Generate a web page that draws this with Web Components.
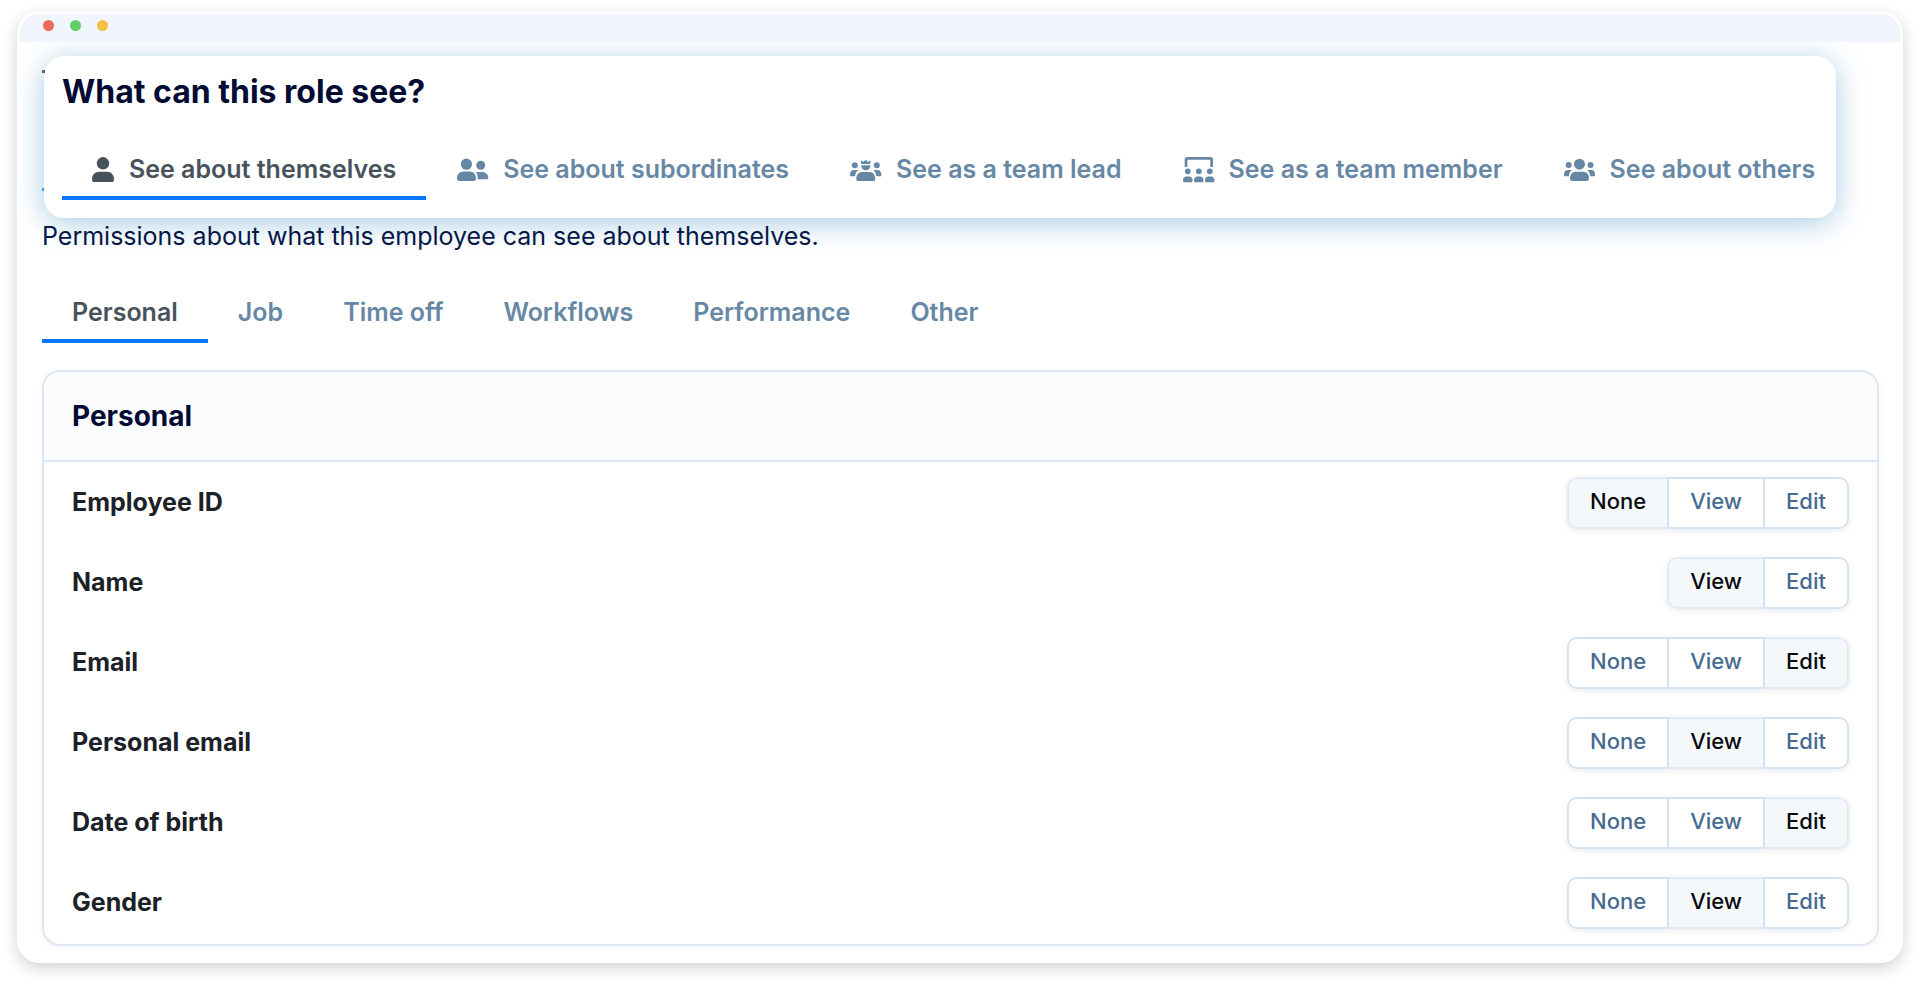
<!DOCTYPE html>
<html lang="en">
<head>
<meta charset="utf-8">
<title>Role permissions</title>
<style>
  body {
    margin: 0;
    padding: 11px 17px 24px;
    background: #fff;
    font-family: Inter, "Liberation Sans", sans-serif;
  }
</style>
</head>
<body>

<app-window>
  <role-card heading="What can this role see?">
    <tab-bar label="Audience">
      <tab-item icon="user" selected>See about themselves</tab-item>
      <tab-item icon="pair">See about subordinates</tab-item>
      <tab-item icon="lead">See as a team lead</tab-item>
      <tab-item icon="class">See as a team member</tab-item>
      <tab-item icon="group">See about others</tab-item>
    </tab-bar>
  </role-card>
  <section-note>Permissions about what this employee can see about themselves.</section-note>
  <tab-bar label="Category" compact>
    <tab-item selected>Personal</tab-item>
    <tab-item>Job</tab-item>
    <tab-item>Time off</tab-item>
    <tab-item>Workflows</tab-item>
    <tab-item>Performance</tab-item>
    <tab-item>Other</tab-item>
  </tab-bar>
  <permission-panel heading="Personal">
    <permission-row name="Employee ID" options="None,View,Edit" value="None"></permission-row>
    <permission-row name="Name" options="View,Edit" value="View"></permission-row>
    <permission-row name="Email" options="None,View,Edit" value="Edit"></permission-row>
    <permission-row name="Personal email" options="None,View,Edit" value="View"></permission-row>
    <permission-row name="Date of birth" options="None,View,Edit" value="Edit"></permission-row>
    <permission-row name="Gender" options="None,View,Edit" value="View"></permission-row>
  </permission-panel>
</app-window>

<script>
const icons = {
  user: [22, `<circle cx="11" cy="7.3" r="6.2"/><path d="M7 15.7h8c4.300 0 7 3.100 7 7.800 0 1.700-.9 2.600-2.400 2.600H2.400C.9 26.100 0 25.200 0 23.500c0-4.700 2.700-7.800 7-7.800z"/>`],
  pair: [31, `<circle cx="9.4" cy="8.2" r="5.6"/><path d="M6.500 15.500h6c4 0 6.500 2.800 6.500 7 0 1.600-.8 2.400-2.200 2.400H2.200C.8 24.900 0 24.100 0 22.500c0-4.200 2.500-7 6.500-7z"/><circle cx="23.700" cy="9.200" r="4.500"/><path d="M19 16h6c3.700 0 6.300 2.500 6.300 5.500 0 1.200-.7 1.800-1.800 1.800h-8.700c-.1-3-.6-5.200-1.800-7.300z"/>`],
  lead: [31, `<path d="M10.600 4.400l2.500 1.400 2.600-1.900 2.600 1.900 2.500-1.400-.7 3.600h-8.800z"/><path d="M11.200 9.200h9.200c0 3-2 5-4.600 5s-4.600-2-4.600-5z"/><path d="M12.500 15.900h6.600c3.800 0 6.200 2.700 6.200 6.800 0 1.500-.8 2.300-2.200 2.300H8.500c-1.400 0-2.200-.8-2.200-2.300 0-4.100 2.400-6.800 6.200-6.800z"/><circle cx="4.800" cy="9.200" r="3"/><circle cx="26.800" cy="9.200" r="3"/><path d="M3.800 14h4.400c-2 1.700-2.900 3.800-3.100 6.300H1.300C.5 20.300 0 19.800 0 18.900 0 16 1.400 14 3.800 14zM27.600 14h-4.400c2 1.700 2.900 3.800 3.100 6.300h3.800c.8 0 1.300-.5 1.300-1.400 0-2.900-1.400-4.900-3.800-4.900z"/>`],
  class: [31, `<path d="M1.700 11V3.400C1.700 1.900 2.600 1 4.100 1h23.500C29.100 1 30 1.900 30 3.400V11h-2.700V3.700H4.400V11z"/><circle cx="4.800" cy="15.300" r="2.900"/><circle cx="15.800" cy="15.300" r="2.900"/><circle cx="26.800" cy="15.300" r="2.900"/><path id="seat" d="M3.500 20.400h2.600c2 0 3.400 1.600 3.400 4 0 1.200-.5 1.900-1.500 1.900H1.500c-1 0-1.500-.7-1.500-1.900 0-2.400 1.500-4 3.500-4z"/><use href="#seat" x="11"/><use href="#seat" x="22"/>`],
  group: [31, `<circle cx="15.500" cy="8.200" r="5.500"/><path d="M12.200 15.800h6.600c3.800 0 6.200 2.700 6.200 6.800 0 1.500-.8 2.300-2.200 2.300H8.200C6.800 24.900 6 24.100 6 22.600c0-4.100 2.400-6.800 6.200-6.800z"/><circle cx="4.700" cy="9" r="3"/><circle cx="26.500" cy="9" r="3"/><path d="M3.800 14h4.200c-2 1.700-2.900 3.800-3.100 6.300H1.300C.5 20.300 0 19.800 0 18.900 0 16 1.400 14 3.800 14zM27.300 14h-4.200c2 1.700 2.900 3.800 3.100 6.300h3.600c.8 0 1.300-.5 1.300-1.400 0-2.900-1.400-4.900-3.800-4.900z"/>`]
};

class Base extends HTMLElement {
  constructor() {
    super();
    this.attachShadow({ mode: "open" });
  }
  connectedCallback() {
    this.shadowRoot.innerHTML = this.render();
  }
}

customElements.define("app-window", class extends Base {
  render() {
    return `<style>
      :host {
        display: block;
        border: 3px solid #fff;
        border-radius: 22px;
        background: #fff;
        box-shadow: 0 5px 16px rgba(0, 0, 0, .18);
      }
      header {
        display: flex;
        align-items: center;
        gap: 16px;
        height: 28px;
        box-sizing: border-box;
        padding: 0 23px 5px;
        border-radius: 19px 19px 0 0;
        background: #f0f5fe;
      }
      i { width: 11px; height: 11px; border-radius: 50%; background: #ee6a5b; }
      i:nth-child(2) { background: #62ce68; }
      i:nth-child(3) { background: #f5bf45; }
      main {
        overflow: hidden;
        padding: 14px 21px 14px 22px;
        border-radius: 0 0 19px 19px;
      }
    </style>
    <header><i></i><i></i><i></i></header>
    <main><slot></slot></main>`;
  }
});

customElements.define("role-card", class extends Base {
  render() {
    return `<style>
      :host {
        display: block;
        position: relative;
        margin: 0 43px 0 2px;
        padding: 16px 0 18px 18px;
        border-radius: 20px;
        background: #fff;
        box-shadow: 0 5px 30px rgba(40, 125, 185, .4);
      }
      /* edges of the content lying under the card */
      :host::before, :host::after {
        content: "";
        position: absolute;
        left: -2px;
        top: 14px;
        width: 3px;
        height: 3px;
        background: #5b6685;
      }
      :host::after {
        top: 132px;
        width: 2px;
        background: #3d95f5;
      }
      h1 { margin: 0 0 27px; font-size: 32px; line-height: 40px; font-weight: 700; color: #020b33; }
    </style>
    <h1>${this.getAttribute("heading")}</h1>
    <slot></slot>`;
  }
});

customElements.define("tab-bar", class extends Base {
  render() {
    return `<style>
      :host { display: block; }
      nav { display: flex; gap: 1px; }
      :host([compact]) nav { gap: 0; }
    </style>
    <nav role="tablist" aria-label="${this.getAttribute("label")}"><slot></slot></nav>`;
  }
});

customElements.define("tab-item", class extends Base {
  render() {
    const on = this.hasAttribute("selected");
    const icon = icons[this.getAttribute("icon")];
    const svg = icon
      ? `<svg width="${icon[0]}" height="27" viewBox="0 0 ${icon[0]} 27" aria-hidden="true">${icon[1]}</svg>`
      : "";
    return `<style>
      :host { display: block; flex: none; }
      button {
        display: flex;
        align-items: center;
        gap: 15px;
        padding: 12px 30px 9px;
        border: 0;
        border-bottom: 4px solid transparent;
        background: none;
        font: 600 25px/36px Inter, "Liberation Sans", sans-serif;
        color: #6788a5;
        white-space: nowrap;
        cursor: pointer;
      }
      button[aria-selected="true"] { color: #48525b; border-bottom-color: #0576ff; }
      svg { overflow: visible; fill: currentColor; }
    </style>
    <button type="button" role="tab" aria-selected="${on}">${svg}<span><slot></slot></span></button>`;
  }
});

customElements.define("section-note", class extends Base {
  render() {
    return `<style>
      :host { display: block; position: relative; margin-bottom: 28px; }
      p { margin: 0; font-size: 25px; line-height: 36px; color: #06184a; }
    </style>
    <p><slot></slot></p>`;
  }
});

customElements.define("permission-panel", class extends Base {
  render() {
    return `<style>
      :host {
        display: block;
        margin-top: 27px;
        border: 2px solid #dce7f3;
        border-radius: 18px;
        box-shadow: 0 2px 6px rgba(60, 90, 130, .06);
      }
      h2 {
        margin: 0;
        padding: 26px 28px;
        border-bottom: 2px solid #dce7f3;
        border-radius: 16px 16px 0 0;
        background: #fbfcfe;
        font-size: 28px;
        line-height: 36px;
        font-weight: 700;
        color: #020b33;
      }
      div { padding: 1px 28px; }
    </style>
    <h2>${this.getAttribute("heading")}</h2>
    <div><slot></slot></div>`;
  }
});

customElements.define("permission-row", class extends Base {
  render() {
    const name = this.getAttribute("name");
    const value = this.getAttribute("value");
    const buttons = this.getAttribute("options").split(",")
      .map(o => `<button type="button" aria-pressed="${o === value}">${o}</button>`).join("");
    return `<style>
      :host { display: flex; align-items: center; justify-content: space-between; height: 80px; }
      #name { padding-bottom: 2px; font-size: 25px; line-height: 36px; font-weight: 700; color: #1b2127; }
      #set { display: flex; border-radius: 10px; box-shadow: 0 2px 6px rgba(60, 70, 90, .1); }
      button {
        position: relative;
        padding: 8px 21px 12px;
        border: 2px solid #d5e2ef;
        background: #fff;
        font: 500 22px/28px Inter, "Liberation Sans", sans-serif;
        color: #466b90;
        cursor: pointer;
      }
      button + button { margin-left: -2px; }
      button:first-child { border-radius: 10px 0 0 10px; }
      button:last-child { border-radius: 0 10px 10px 0; }
      button[aria-pressed="false"] { z-index: 1; }
      button[aria-pressed="true"] { background: #f5f8fb; border-color: #e2ebf4; color: #080a0d; }
    </style>
    <span id="name">${name}</span>
    <div id="set" role="group" aria-labelledby="name">${buttons}</div>`;
  }
});
</script>
</body>
</html>
